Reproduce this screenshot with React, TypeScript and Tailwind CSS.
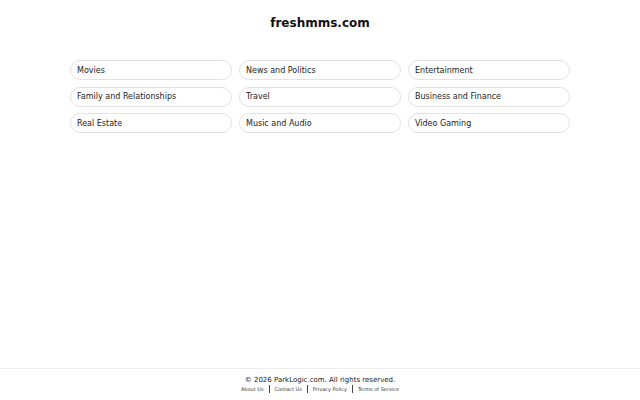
const categories = [
  "Movies",
  "News and Politics",
  "Entertainment",
  "Family and Relationships",
  "Travel",
  "Business and Finance",
  "Real Estate",
  "Music and Audio",
  "Video Gaming",
];

const links = ["About Us", "Contact Us", "Privacy Policy", "Terms of Service"];

export default function App() {
  return (
    <div className="flex min-h-screen flex-col bg-white font-['DejaVu_Sans',sans-serif] text-[#222]">
      <main className="flex flex-col items-center">
        <h1 className="pt-[14px] text-[12px] font-bold leading-[18px] text-[#111]">
          freshmms.com
        </h1>

        <div className="mt-[28px] grid w-[500px] grid-cols-3 gap-x-[7px] gap-y-[6.5px]">
          {categories.map((name) => (
            <a
              key={name}
              href="#"
              className="flex h-[20px] items-center rounded-full border border-[#e2e2e2] px-[6px] pt-px text-[8px] text-[#222]"
            >
              {name}
            </a>
          ))}
        </div>
      </main>

      <footer className="mt-auto flex flex-col items-center border-t border-[#eeeeee] pt-[7px] pb-[7px]">
        <p className="text-[7px] leading-[9px] text-[#222]">© 2026 ParkLogic.com. All rights reserved.</p>
        <div className="flex items-center text-[5px] leading-[8px] text-[#333]">
          {links.map((link, i) => (
            <span key={link} className="flex items-center">
              {i > 0 && <span className="mx-[5px] h-[8px] w-px bg-[#444]" />}
              <a href="#">{link}</a>
            </span>
          ))}
        </div>
      </footer>
    </div>
  );
}
